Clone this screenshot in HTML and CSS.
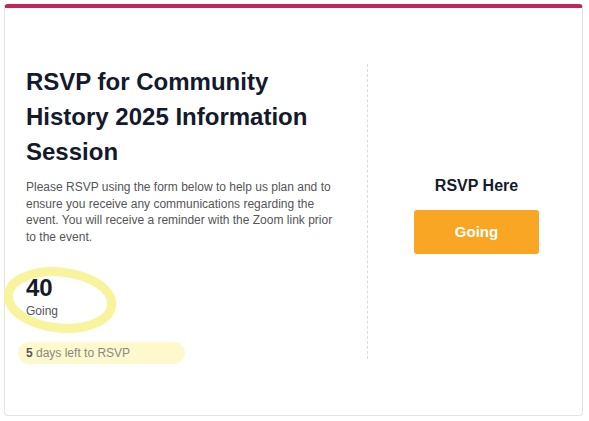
FILE: index.html
```html
<!DOCTYPE html>
<html>
<head>
<meta charset="utf-8">
<link rel="stylesheet" href="styles.css">
</head>
<body>
<div class="card">
  <div class="card-body">
    <div class="info">
      <h1 class="title">RSVP for Community History 2025 Information Session</h1>
      <p class="desc">Please RSVP using the form below to help us plan and to ensure you receive any communications regarding the event. You will receive a reminder with the Zoom link prior to the event.</p>
      <div class="stat">
        <svg class="ring" width="124" height="76" viewBox="0 0 124 76">
          <ellipse cx="60" cy="38" rx="52" ry="28" fill="none" stroke="#f8f49e" stroke-width="9" transform="rotate(6 60 38)"/>
        </svg>
        <div class="stat-num">40</div>
        <div class="stat-label">Going</div>
      </div>
      <div class="deadline"><b>5</b> days left to RSVP</div>
    </div>
    <div class="action">
      <h2 class="action-title">RSVP Here</h2>
      <button class="btn">Going</button>
    </div>
  </div>
</div>
</body>
</html>
```
FILE: styles.css
```css
html, body {
  margin: 0;
  padding: 0;
  background: #fff;
  font-family: "Liberation Sans", Arial, sans-serif;
}
.card {
  margin: 4px 0 0 4px;
  width: 577px;
  height: 407px;
  border: 1px solid #e2e2e2;
  border-top: 4px solid #c2255c;
  border-radius: 4px;
  box-sizing: content-box;
}
.card-body {
  display: flex;
  padding: 56px 0 56px 0;
  height: 295px;
}
.info {
  box-sizing: border-box;
  width: 363px;
  padding: 0 24px 0 21px;
  border-right: 1px dashed #dcdcdc;
}
.title {
  margin: 0;
  font-size: 24px;
  line-height: 35px;
  font-weight: bold;
  color: #141a2b;
}
.desc {
  margin: 10px 0 0 0;
  font-size: 12px;
  line-height: 16.5px;
  color: #555;
}
.stat {
  position: relative;
  margin-top: 30px;
}
.ring {
  position: absolute;
  left: -26px;
  top: -13px;
}
.stat-num {
  position: relative;
  font-size: 24px;
  font-weight: bold;
  line-height: 26px;
  color: #141a2b;
}
.stat-label {
  position: relative;
  font-size: 12px;
  line-height: 21px;
  color: #555;
}
.deadline {
  margin: 20px 0 0 -8px;
  width: 167px;
  height: 22px;
  box-sizing: border-box;
  padding-left: 8px;
  border-radius: 11px;
  background: #fdf9cd;
  font-size: 12px;
  line-height: 22px;
  color: #888;
}
.deadline b {
  color: #555;
}
.action {
  flex: 1;
  display: flex;
  flex-direction: column;
  align-items: center;
  justify-content: center;
  padding: 6px 0 0 3px;
}
.action-title {
  margin: 0 0 14px 0;
  font-size: 16px;
  line-height: 20px;
  font-weight: bold;
  color: #141a2b;
}
.btn {
  width: 125px;
  height: 44px;
  border: none;
  border-radius: 3px;
  background: #f8a623;
  color: #fff;
  font-family: "Liberation Sans", Arial, sans-serif;
  font-size: 15px;
  font-weight: bold;
}
```
